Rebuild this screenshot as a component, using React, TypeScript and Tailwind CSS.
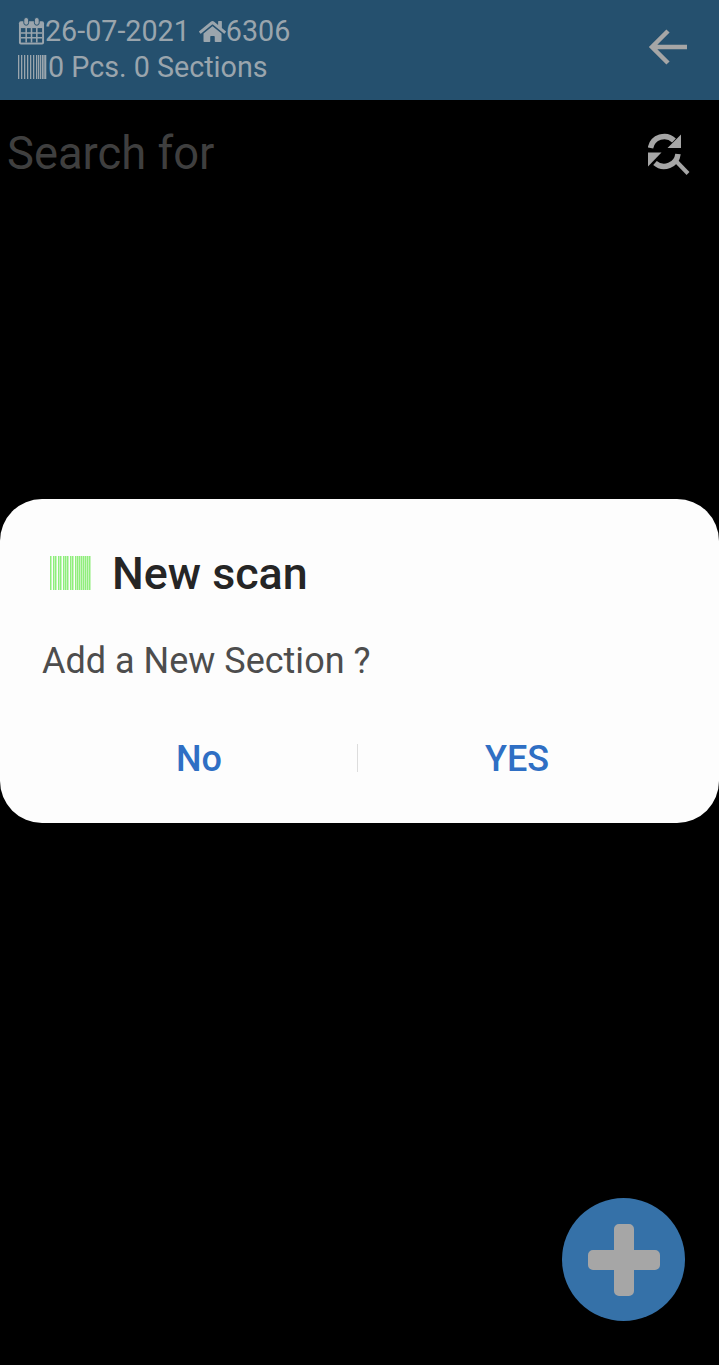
import { FaHome } from "react-icons/fa";

const font = { fontFamily: "Roboto, sans-serif" };

const barcodeBars = [0, 3, 6, 9, 12, 15, 18, 20, 22, 24, 25.5, 27];
const dialogBars = [0, 3, 5, 8, 10, 13, 15, 17, 20, 22, 25, 27, 29, 31, 33, 35, 37, 39];

function CalendarIcon() {
  return (
    <svg width="27" height="30" viewBox="0 0 28 30" fill="none" className="shrink-0">
      <rect x="1" y="5" width="26" height="24" rx="2" fill="#9aa5ad" />
      <rect x="3" y="12" width="22" height="15" fill="#25506e" />
      <path d="M3 17h22M3 22h22M8.500 12v15M14 12v15M19.500 12v15" stroke="#9aa5ad" strokeWidth="1.6" />
      <rect x="6" y="1" width="5" height="8" rx="2.500" fill="#9aa5ad" stroke="#25506e" />
      <rect x="17" y="1" width="5" height="8" rx="2.500" fill="#9aa5ad" stroke="#25506e" />
    </svg>
  );
}

function BarcodeIcon() {
  return (
    <svg width="30" height="24" viewBox="0 0 30 24" className="shrink-0">
      {barcodeBars.map((x) => (
        <rect key={x} x={x} y="0" width="1.3" height="24" fill="#9aa5ad" />
      ))}
    </svg>
  );
}

function SearchSyncIcon() {
  return (
    <svg width="42" height="42" viewBox="0 0 42 42" fill="none">
      <path d="M2.500 15A14 14 0 0 1 26 7.500" stroke="#a6a6a6" strokeWidth="5.500" />
      <path d="M33 1.500V15H19.500z" fill="#a6a6a6" />
      <path d="M30 21A14 14 0 0 1 7 30" stroke="#a6a6a6" strokeWidth="5.500" />
      <path d="M0 19.500h13.500L0 33.500z" fill="#a6a6a6" />
      <path d="M27 27l13 13.500" stroke="#a6a6a6" strokeWidth="4" />
    </svg>
  );
}

export default function App() {
  return (
    <div className="relative h-[1365px] w-[719px] overflow-hidden bg-black" style={font}>
      {/* Header */}
      <header className="flex h-[100px] items-center justify-between bg-[#25506e] pb-[2px] pl-[18px] pr-[31px]">
        <div className="text-[28.700px] leading-[36px] text-[#9aa5ad]">
          <div className="flex items-center">
            <CalendarIcon />
            <span>26-07-2021</span>
            <FaHome className="ml-[9px] h-[27px] w-[27px] shrink-0" />
            <span>6306</span>
          </div>
          <div className="flex items-center">
            <BarcodeIcon />
            <span>0 Pcs. 0 Sections</span>
          </div>
        </div>
        <svg width="40" height="38" viewBox="0 0 40 38" fill="none" className="mb-[4px]">
          <path d="M39 19H4M20 3L4 19l16 16" stroke="#a6a6a6" strokeWidth="4.500" />
        </svg>
      </header>

      {/* Search */}
      <div className="flex h-[107px] items-center justify-between pl-[7px] pr-[29px]">
        <span className="text-[45.300px] text-[#3f3f3f]">Search for</span>
        <SearchSyncIcon />
      </div>

      {/* Dialog */}
      <div className="absolute left-0 top-[499px] h-[324px] w-full rounded-[42px] bg-[#fdfdfd] px-[42px] pt-[48px]">
        <div className="flex h-[54px] items-center gap-[20px] pl-[8px]">
          <svg width="42" height="34" viewBox="0 0 42 34" className="-mt-[2px] shrink-0">
            {dialogBars.map((x) => (
              <rect key={x} x={x} y="0" width="1.5" height="34" fill="#8fee7c" />
            ))}
          </svg>
          <span className="text-[44.800px] font-medium leading-none text-[#252525]">New scan</span>
        </div>
        <p className="mt-[36px] text-[36px] leading-[48px] text-[#4d4d4d]">Add a New Section ?</p>
        <div className="absolute inset-x-0 bottom-[37px] flex h-[54px] items-center">
          <span className="w-[357px] pl-[41px] text-center text-[36px] font-medium text-[#2f6fc4]">No</span>
          <span className="mb-[2px] h-[28px] w-px bg-[#dddddd]" />
          <span className="flex-1 pr-[43px] text-center text-[36px] font-medium text-[#2f6fc4]">YES</span>
        </div>
      </div>

      {/* Floating add button */}
      <button className="absolute left-[562px] top-[1198px] flex h-[123px] w-[123px] items-center justify-center rounded-full bg-[#3571a8]">
        <svg width="72" height="72" viewBox="0 0 72 72">
          <path
            d="M31 0h10a5 5 0 0 1 5 5v21h21a5 5 0 0 1 5 5v10a5 5 0 0 1-5 5H46v21a5 5 0 0 1-5 5H31a5 5 0 0 1-5-5V46H5a5 5 0 0 1-5-5V31a5 5 0 0 1 5-5h21V5a5 5 0 0 1 5-5z"
            fill="#a6a6a6"
          />
        </svg>
      </button>
    </div>
  );
}
